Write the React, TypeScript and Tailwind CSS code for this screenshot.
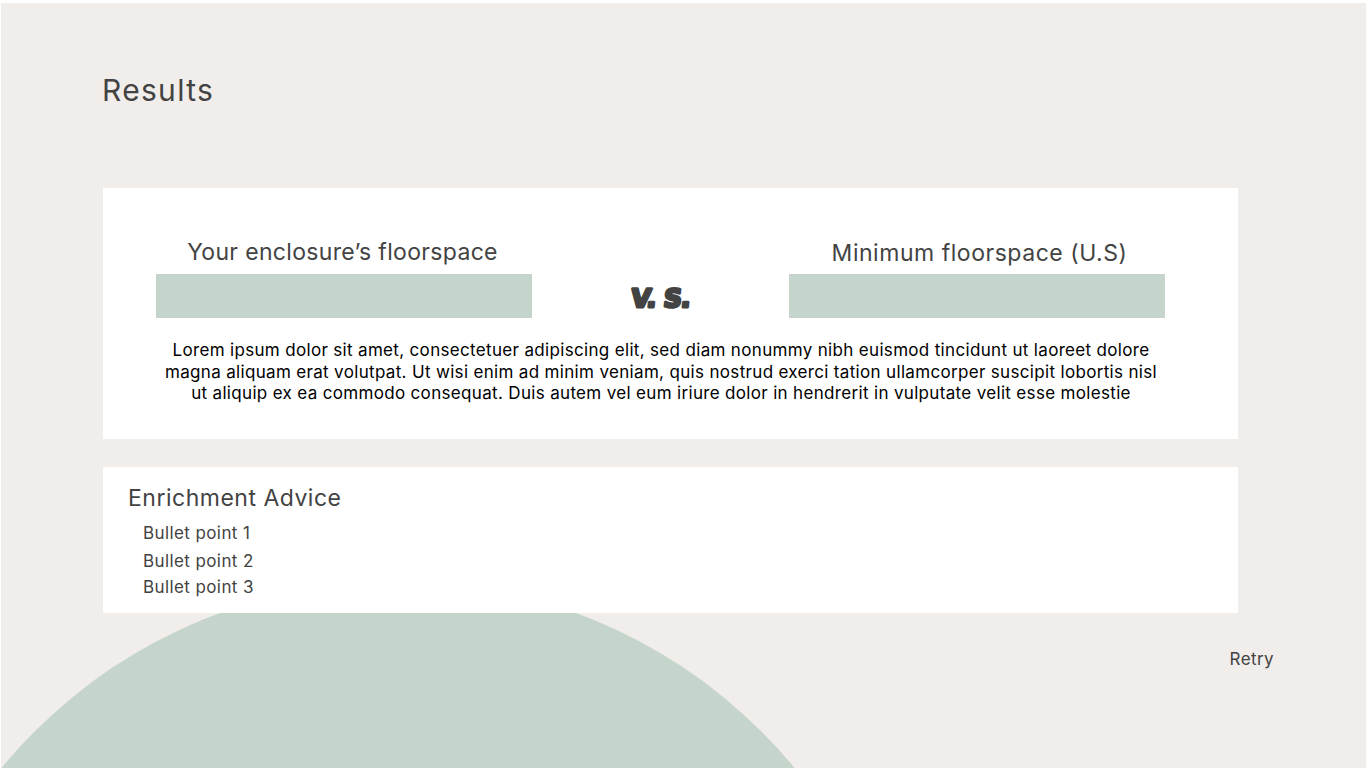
export default function App() {
  return (
    <div className="h-screen overflow-hidden bg-white pt-[3px] pl-px font-['Inter',sans-serif]">
      <div className="relative flex h-full flex-col overflow-hidden bg-[#f1edea] pl-[102px] text-[#434343]">
        {/* decorative circle behind the cards */}
        <div className="absolute left-[-117px] top-[578px] h-[1028px] w-[1028px] rounded-full bg-[#c5d5cb]" />

        <h1 className="relative mt-[67px] h-[118px] -ml-px text-[30px] leading-[40px] tracking-[1.3px]">Results</h1>

        <section className="relative h-[251px] w-[1135px] bg-white px-[53px] pt-[48px]">
          <div className="flex items-start">
            <div className="w-[376px]">
              <h2 className="h-[38px] pr-[3px] text-center text-[23px] leading-[32px] tracking-[0.33px]">Your enclosure’s floorspace</h2>
              <div className="h-[44px] bg-[#c5d5cb]" />
            </div>
            <div className="flex w-[257px] justify-center pt-[44px]">
              <svg width="72" height="36" viewBox="0 0 72 36" className="fill-[#434343] stroke-[#434343]">
                <text x="38" y="27" textAnchor="middle" strokeWidth="3" strokeLinejoin="round" fontFamily="DejaVu Sans" fontWeight="700" fontSize="25" letterSpacing="-0.3" wordSpacing="-1" transform="skewX(-6)">
                  V. S.
                </text>
              </svg>
            </div>
            <div className="w-[376px]">
              <h2 className="h-[38px] pt-px pl-[5px] text-center text-[23px] leading-[32px] tracking-[0.53px]">Minimum floorspace (U.S)</h2>
              <div className="h-[44px] bg-[#c5d5cb]" />
            </div>
          </div>
          <p className="mt-[22px] -ml-[3px] w-[1016px] text-center text-[17px] font-normal leading-[21.5px] tracking-[0.33px] text-black">
            Lorem ipsum dolor sit amet, consectetuer adipiscing elit, sed diam nonummy nibh euismod tincidunt ut laoreet dolore
            <br />
            magna aliquam erat volutpat. Ut wisi enim ad minim veniam, quis nostrud exerci tation ullamcorper suscipit lobortis nisl
            <br />
            ut aliquip ex ea commodo consequat. Duis autem vel eum iriure dolor in hendrerit in vulputate velit esse molestie
          </p>
        </section>

        <section className="relative mt-[28px] h-[146px] w-[1135px] bg-white pl-[25px] pt-[15px]">
          <h2 className="text-[23px] leading-[32px] tracking-[0.5px]">Enrichment Advice</h2>
          <ul className="mt-[6px] pl-[15px] text-[17px] font-normal tracking-[0.4px]">
            <li className="h-[28px] leading-[26px]">Bullet point 1</li>
            <li className="h-[26px] leading-[26px]">Bullet point 2</li>
            <li className="leading-[26px]">Bullet point 3</li>
          </ul>
        </section>

        <div className="relative mt-[33px] flex w-[1171px] justify-end text-[17px] font-normal leading-[26px] tracking-[0.4px]">
          <button>Retry</button>
        </div>
      </div>
    </div>
  );
}
